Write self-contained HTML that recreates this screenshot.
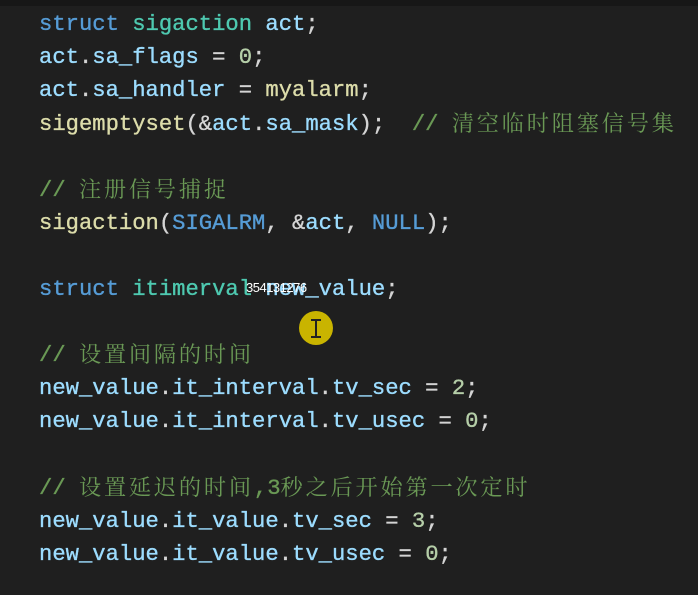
<!DOCTYPE html>
<html><head><meta charset="utf-8"><style>
html,body{margin:0;padding:0;}
body{width:698px;height:595px;background:#1f1f1f;position:relative;overflow:hidden;font-family:"Liberation Mono",monospace;font-size:22.2px;color:#d4d4d4;-webkit-text-stroke:0.35px;}
.top{position:absolute;left:0;top:0;width:698px;height:6px;background:#171717;}
.l{position:absolute;left:39px;height:33px;line-height:33px;white-space:pre;}
.k{color:#569cd6}.t{color:#4ec9b0}.v{color:#9cdcfe}.f{color:#dcdcaa}.n{color:#b5cea8}.c{color:#6a9955}
.z{font-family:"Noto Serif CJK SC","WenQuanYi Zen Hei",serif;letter-spacing:2.8px;line-height:1;display:inline-block;vertical-align:top;margin-top:3px;-webkit-text-stroke:0;}
.ov{position:absolute;left:246px;top:280px;color:#fff;font-family:"Liberation Sans",sans-serif;font-size:13px;letter-spacing:-0.5px;-webkit-text-stroke:0;}
.cur{position:absolute;left:299px;top:311px;width:34px;height:34px;border-radius:50%;background:#c9b400;}
.cur i{position:absolute;left:16px;top:8px;width:2px;height:18px;background:#222;}
.cur b{position:absolute;left:12px;width:10px;height:2px;background:#222;}
</style></head><body>
<div class="top"></div>
<div class="l" style="top:8px"><span class="k">struct</span> <span class="t">sigaction</span> <span class="v">act</span>;</div>
<div class="l" style="top:41px"><span class="v">act</span>.<span class="v">sa_flags</span> = <span class="n">0</span>;</div>
<div class="l" style="top:74px"><span class="v">act</span>.<span class="v">sa_handler</span> = <span class="f">myalarm</span>;</div>
<div class="l" style="top:108px"><span class="f">sigemptyset</span>(&amp;<span class="v">act</span>.<span class="v">sa_mask</span>);  <span class="c">// <span class="z">清空临时阻塞信号集</span></span></div>
<div class="l" style="top:174px"><span class="c">// <span class="z">注册信号捕捉</span></span></div>
<div class="l" style="top:207px"><span class="f">sigaction</span>(<span class="k">SIGALRM</span>, &amp;<span class="v">act</span>, <span class="k">NULL</span>);</div>
<div class="l" style="top:273px"><span class="k">struct</span> <span class="t">itimerval</span> <span class="v">new_value</span>;</div>
<div class="ov">354131276</div>
<div class="cur"><i></i><b style="top:8px"></b><b style="top:25px"></b></div>
<div class="l" style="top:339px"><span class="c">// <span class="z">设置间隔的时间</span></span></div>
<div class="l" style="top:372px"><span class="v">new_value</span>.<span class="v">it_interval</span>.<span class="v">tv_sec</span> = <span class="n">2</span>;</div>
<div class="l" style="top:405px"><span class="v">new_value</span>.<span class="v">it_interval</span>.<span class="v">tv_usec</span> = <span class="n">0</span>;</div>
<div class="l" style="top:472px"><span class="c">// <span class="z">设置延迟的时间</span>,3<span class="z">秒之后开始第一次定时</span></span></div>
<div class="l" style="top:505px"><span class="v">new_value</span>.<span class="v">it_value</span>.<span class="v">tv_sec</span> = <span class="n">3</span>;</div>
<div class="l" style="top:538px"><span class="v">new_value</span>.<span class="v">it_value</span>.<span class="v">tv_usec</span> = <span class="n">0</span>;</div>
</body></html>
